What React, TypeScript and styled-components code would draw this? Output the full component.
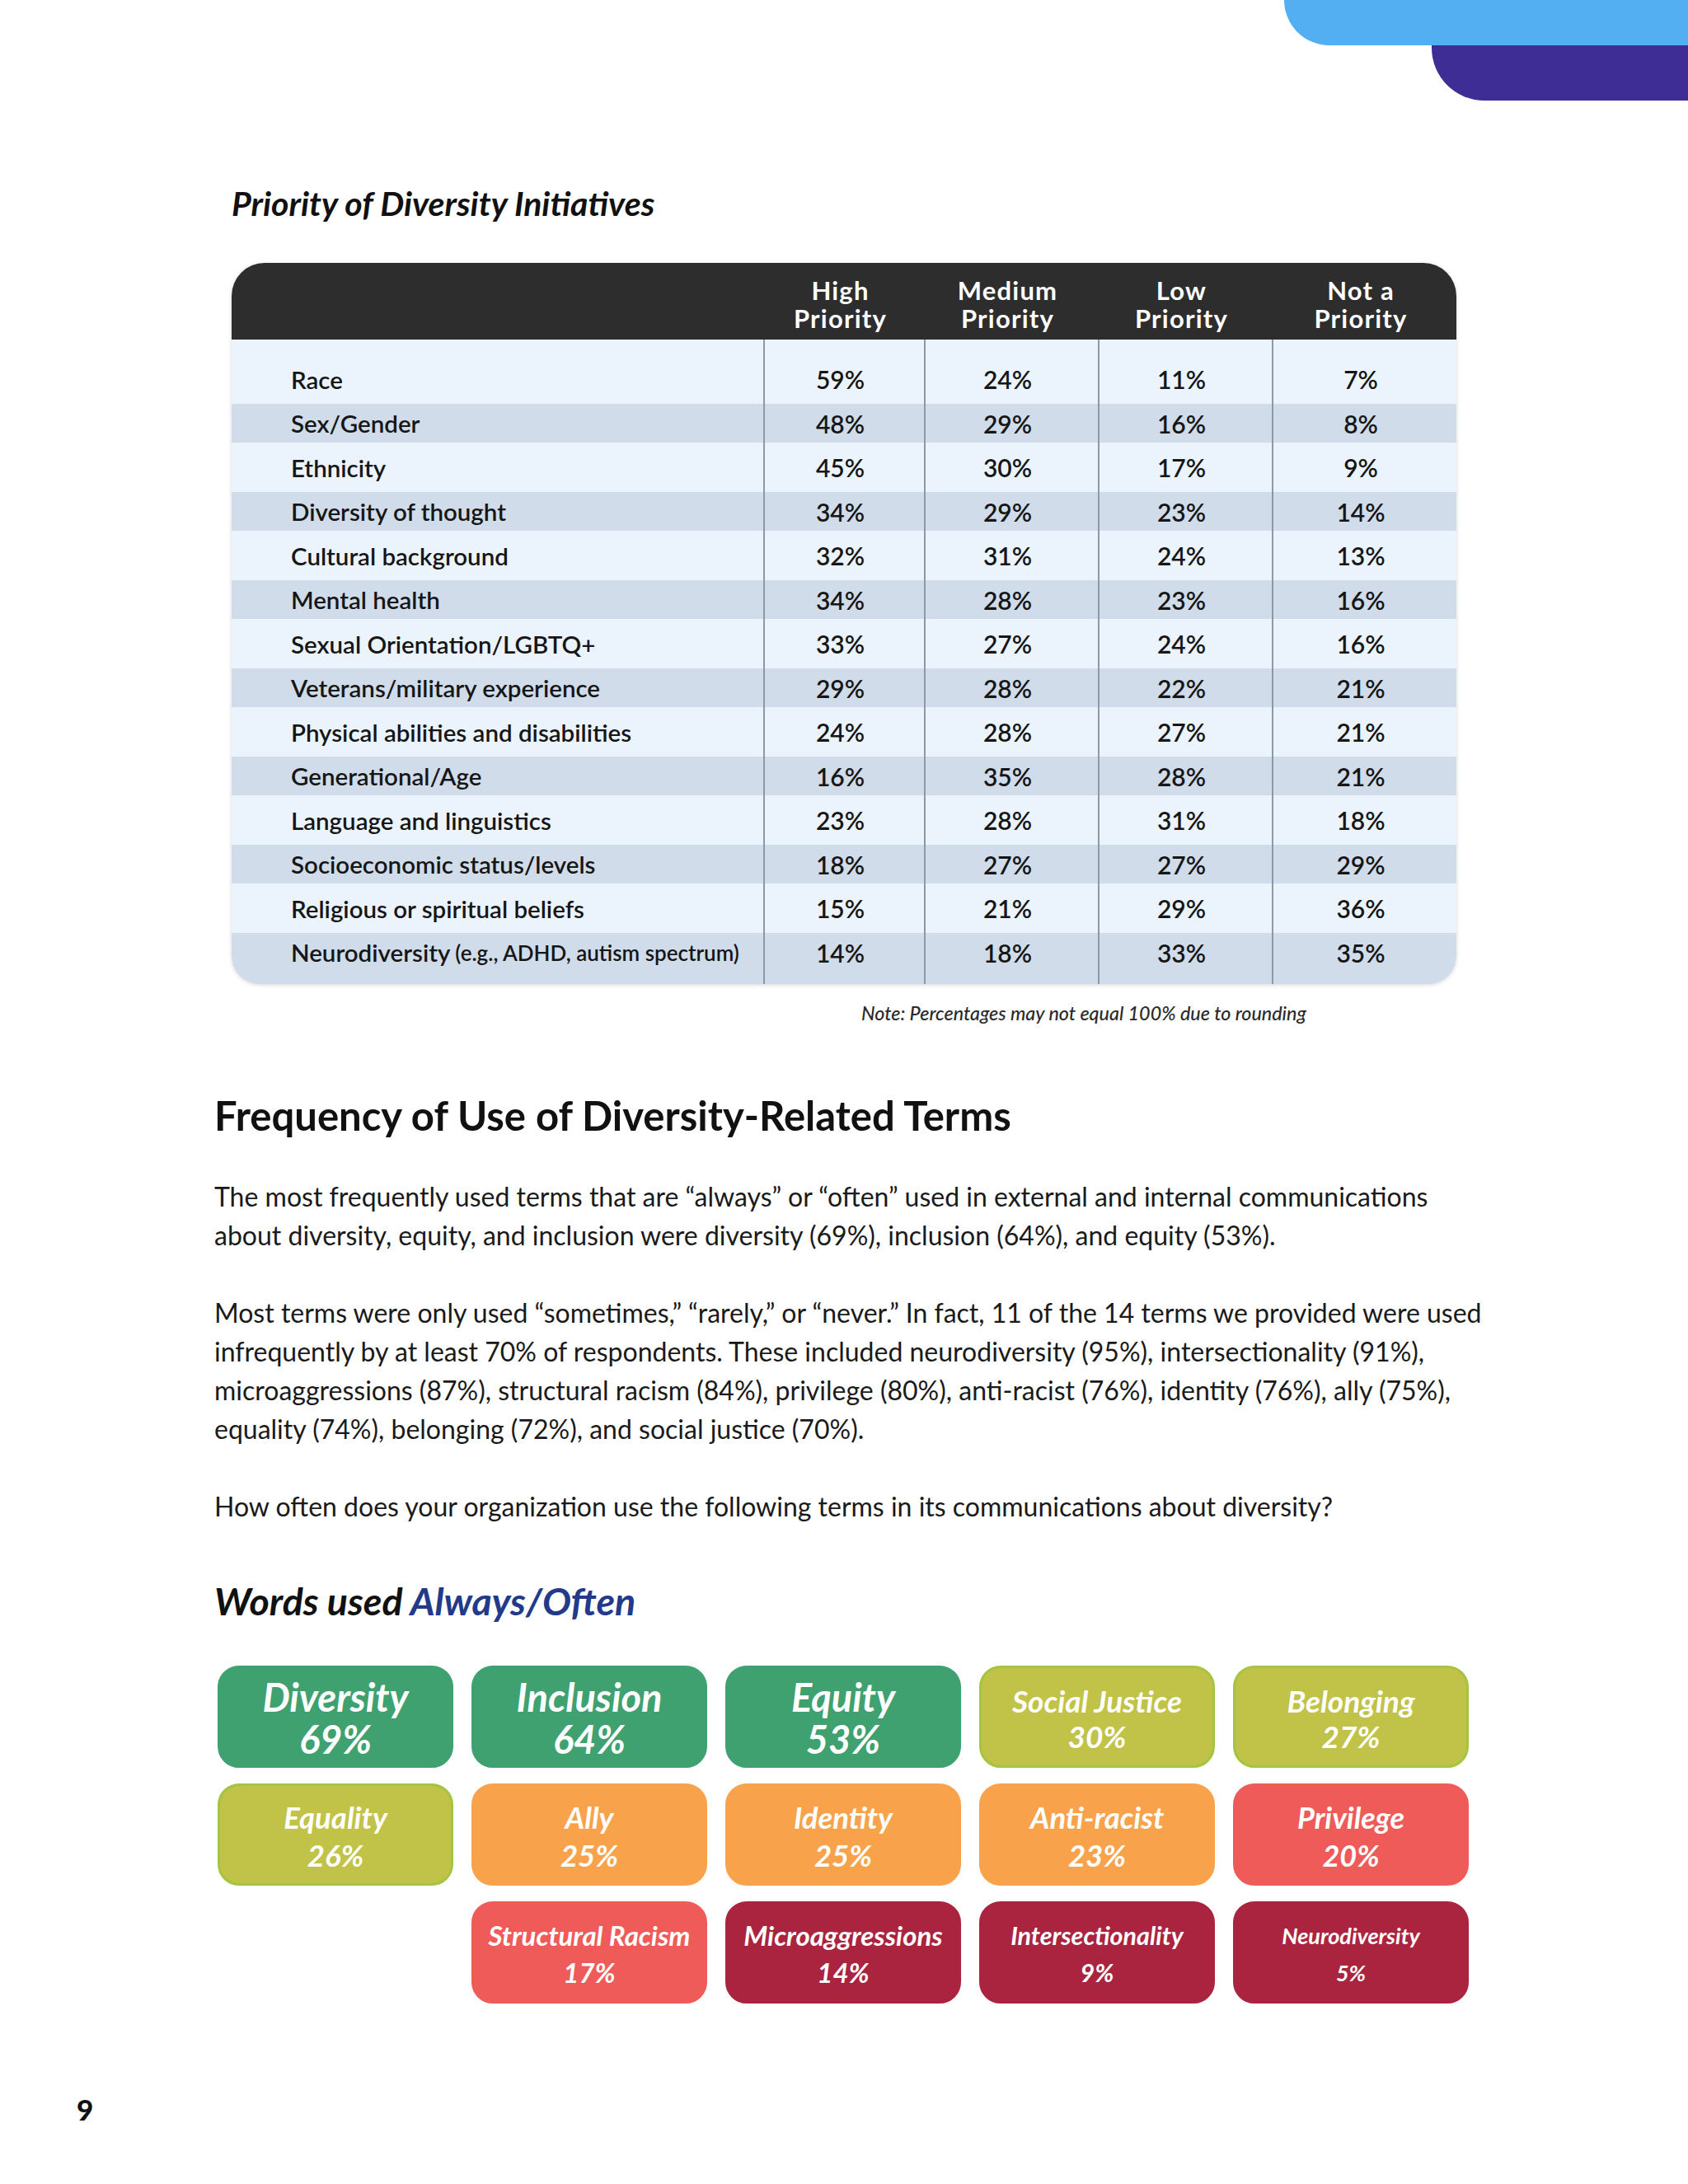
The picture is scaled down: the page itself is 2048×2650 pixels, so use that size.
import React from "react";
import styled, { createGlobalStyle } from "styled-components";

const GlobalStyle = createGlobalStyle`
  html, body { margin: 0; padding: 0; background: #ffffff; }
  body { font-family: Lato, "Noto Sans", "Liberation Sans", sans-serif; color: #161616; }
  * { box-sizing: content-box; }
`;

const Page = styled.div`
  position: relative;
  width: 2048px;
  height: 2650px;
  overflow: hidden;
  background: #ffffff;
  display: flex;
  flex-direction: column;
`;

const BlueBand = styled.div`
  position: absolute;
  top: 0;
  right: 0;
  width: 490px;
  height: 55px;
  background: #53aef2;
  border-bottom-left-radius: 64px;
`;

const PurpleBand = styled.div`
  position: absolute;
  top: 55px;
  right: 0;
  width: 311px;
  height: 67px;
  background: #3e2d95;
  border-bottom-left-radius: 64px;
`;

const Content = styled.main`
  display: flex;
  flex-direction: column;
  padding: 223px 0 0 260px;
`;

const TableTitle = styled.h2`
  margin: 0 0 0 21px;
  font-size: 41px;
  line-height: 48px;
  font-weight: 700;
  font-style: italic;
  color: #111;
`;

const cols = "645px 195px 211px 211px 224px";

const Table = styled.div`
  margin: 48px 0 0 21px;
  width: 1486px;
  border-radius: 40px 40px 34px 34px;
  overflow: hidden;
  box-shadow: 0 1px 5px rgba(0, 0, 0, 0.16);
`;

const HeadRow = styled.div`
  display: grid;
  grid-template-columns: ${cols};
  height: 93px;
  background: #2d2d2d;
`;

const HeadCell = styled.div`
  display: flex;
  align-items: center;
  justify-content: center;
  text-align: center;
  padding-top: 6px;
  padding-right: 8px;
  color: #ffffff;
  font-size: 31px;
  line-height: 34px;
  font-weight: 700;
  letter-spacing: 1.2px;
`;

const Body = styled.div`
  & > div:first-child > div {
    padding-top: 18px;
  }
  & > div:last-child > div {
    padding-bottom: 15px;
  }
`;

const BodyRow = styled.div<{ $alt: boolean }>`
  display: grid;
  grid-template-columns: ${cols};
  background: ${(p) => (p.$alt ? "#d0dcea" : "#ebf4fd")};
  & > div {
    min-height: ${(p) => (p.$alt ? 47 : 60)}px;
  }
`;

const LabelCell = styled.div`
  display: flex;
  align-items: center;
  padding-left: 72px;
  font-size: 29.5px;
  font-weight: 600;
  color: #161616;
`;

const Aside = styled.span`
  font-size: 26px;
  margin-left: 6px;
`;

const ValueCell = styled.div`
  display: flex;
  align-items: center;
  justify-content: center;
  padding-right: 10px;
  border-left: 2px solid #8e99a6;
  font-size: 30px;
  font-weight: 600;
  color: #161616;
`;

const Note = styled.p`
  margin: 20px 0 0 785px;
  font-size: 23.3px;
  line-height: 30px;
  font-style: italic;
  font-weight: 500;
  color: #2a2a2a;
`;

const SectionHeading = styled.h1`
  margin: 80px 0 0 0;
  font-size: 49px;
  line-height: 58px;
  font-weight: 700;
  color: #111;
`;

const Paragraph = styled.p<{ $gap: number }>`
  margin: ${(p) => p.$gap}px 0 0 0;
  font-size: 32px;
  line-height: 47px;
  font-weight: 400;
  white-space: nowrap;
  color: #1a1a1a;
`;

const WordsHeading = styled.h3`
  margin: 63px 0 0 0;
  font-size: 46.5px;
  line-height: 56px;
  font-weight: 700;
  font-style: italic;
  color: #111;
`;

const Accent = styled.span`
  color: #233a8b;
`;

const WordGrid = styled.div`
  margin: 51px 0 0 4px;
  display: grid;
  grid-template-columns: repeat(5, 286px);
  column-gap: 22px;
  row-gap: 19px;
`;

const palette: Record<string, { bg: string; border: string }> = {
  green: { bg: "#3fa170", border: "#3fa170" },
  lime: { bg: "#c1c248", border: "#a4c442" },
  orange: { bg: "#f8a34b", border: "#f8a34b" },
  coral: { bg: "#ef5b58", border: "#ef5b58" },
  crimson: { bg: "#aa243f", border: "#aa243f" },
};

const WordBox = styled.div<{ $tone: string; $start?: number }>`
  grid-column-start: ${(p) => p.$start ?? "auto"};
  height: 118px;
  border-radius: 26px;
  background: ${(p) => palette[p.$tone].bg};
  border: 3px solid ${(p) => palette[p.$tone].border};
  display: flex;
  align-items: center;
  justify-content: center;
  color: #ffffff;
  font-style: italic;
  font-weight: 700;
  text-align: center;
`;

const WordLabel = styled.p<{ $size: number; $lh: number }>`
  margin: 0;
  padding-top: 3px;
  font-size: ${(p) => p.$size}px;
  line-height: ${(p) => p.$lh}px;
  white-space: nowrap;
`;

const Footer = styled.footer`
  margin-top: auto;
  padding: 0 0 70px 93px;
  font-size: 35px;
  line-height: 42px;
  font-weight: 900;
  color: #111;
`;

type Row = { label: string; aside?: string; v: [string, string, string, string] };

const rows: Row[] = [
  { label: "Race", v: ["59%", "24%", "11%", "7%"] },
  { label: "Sex/Gender", v: ["48%", "29%", "16%", "8%"] },
  { label: "Ethnicity", v: ["45%", "30%", "17%", "9%"] },
  { label: "Diversity of thought", v: ["34%", "29%", "23%", "14%"] },
  { label: "Cultural background", v: ["32%", "31%", "24%", "13%"] },
  { label: "Mental health", v: ["34%", "28%", "23%", "16%"] },
  { label: "Sexual Orientation/LGBTQ+", v: ["33%", "27%", "24%", "16%"] },
  { label: "Veterans/military experience", v: ["29%", "28%", "22%", "21%"] },
  { label: "Physical abilities and disabilities", v: ["24%", "28%", "27%", "21%"] },
  { label: "Generational/Age", v: ["16%", "35%", "28%", "21%"] },
  { label: "Language and linguistics", v: ["23%", "28%", "31%", "18%"] },
  { label: "Socioeconomic status/levels", v: ["18%", "27%", "27%", "29%"] },
  { label: "Religious or spiritual beliefs", v: ["15%", "21%", "29%", "36%"] },
  { label: "Neurodiversity", aside: "(e.g., ADHD, autism spectrum)", v: ["14%", "18%", "33%", "35%"] },
];

type Word = {
  name: string;
  pct: string;
  tone: string;
  size: number;
  lh: number;
  start?: number;
};

const words: Word[] = [
  { name: "Diversity", pct: "69%", tone: "green", size: 47, lh: 51 },
  { name: "Inclusion", pct: "64%", tone: "green", size: 47, lh: 51 },
  { name: "Equity", pct: "53%", tone: "green", size: 47, lh: 51 },
  { name: "Social Justice", pct: "30%", tone: "lime", size: 37, lh: 43 },
  { name: "Belonging", pct: "27%", tone: "lime", size: 37, lh: 43 },
  { name: "Equality", pct: "26%", tone: "lime", size: 36.5, lh: 46 },
  { name: "Ally", pct: "25%", tone: "orange", size: 36.5, lh: 46 },
  { name: "Identity", pct: "25%", tone: "orange", size: 36.5, lh: 46 },
  { name: "Anti-racist", pct: "23%", tone: "orange", size: 36.5, lh: 46 },
  { name: "Privilege", pct: "20%", tone: "coral", size: 36, lh: 46 },
  { name: "Structural Racism", pct: "17%", tone: "coral", size: 33, lh: 45, start: 2 },
  { name: "Microaggressions", pct: "14%", tone: "crimson", size: 33, lh: 45 },
  { name: "Intersectionality", pct: "9%", tone: "crimson", size: 30.5, lh: 45 },
  { name: "Neurodiversity", pct: "5%", tone: "crimson", size: 27, lh: 45 },
];

export default function App() {
  return (
    <Page>
      <GlobalStyle />
      <BlueBand />
      <PurpleBand />
      <Content>
        <TableTitle>Priority of Diversity Initiatives</TableTitle>
        <Table>
          <HeadRow>
            <HeadCell />
            <HeadCell>
              High
              <br />
              Priority
            </HeadCell>
            <HeadCell>
              Medium
              <br />
              Priority
            </HeadCell>
            <HeadCell>
              Low
              <br />
              Priority
            </HeadCell>
            <HeadCell>
              Not a
              <br />
              Priority
            </HeadCell>
          </HeadRow>
          <Body>
            {rows.map((r, i) => (
              <BodyRow key={r.label} $alt={i % 2 === 1}>
                <LabelCell>
                  {r.label}
                  {r.aside && <Aside>{r.aside}</Aside>}
                </LabelCell>
                {r.v.map((v, j) => (
                  <ValueCell key={j}>{v}</ValueCell>
                ))}
              </BodyRow>
            ))}
          </Body>
        </Table>
        <Note>Note: Percentages may not equal 100% due to rounding</Note>

        <SectionHeading>Frequency of Use of Diversity-Related Terms</SectionHeading>
        <Paragraph $gap={46}>
          The most frequently used terms that are “always” or “often” used in external and internal communications
          <br />
          about diversity, equity, and inclusion were diversity (69%), inclusion (64%), and equity (53%).
        </Paragraph>
        <Paragraph $gap={47}>
          Most terms were only used “sometimes,” “rarely,” or “never.” In fact, 11 of the 14 terms we provided were used
          <br />
          infrequently by at least 70% of respondents. These included neurodiversity (95%), intersectionality (91%),
          <br />
          microaggressions (87%), structural racism (84%), privilege (80%), anti-racist (76%), identity (76%), ally (75%),
          <br />
          equality (74%), belonging (72%), and social justice (70%).
        </Paragraph>
        <Paragraph $gap={47}>
          How often does your organization use the following terms in its communications about diversity?
        </Paragraph>

        <WordsHeading>
          Words used <Accent>Always/Often</Accent>
        </WordsHeading>
        <WordGrid>
          {words.map((w) => (
            <WordBox key={w.name} $tone={w.tone} $start={w.start}>
              <WordLabel $size={w.size} $lh={w.lh}>
                {w.name}
                <br />
                {w.pct}
              </WordLabel>
            </WordBox>
          ))}
        </WordGrid>
      </Content>
      <Footer>9</Footer>
    </Page>
  );
}
